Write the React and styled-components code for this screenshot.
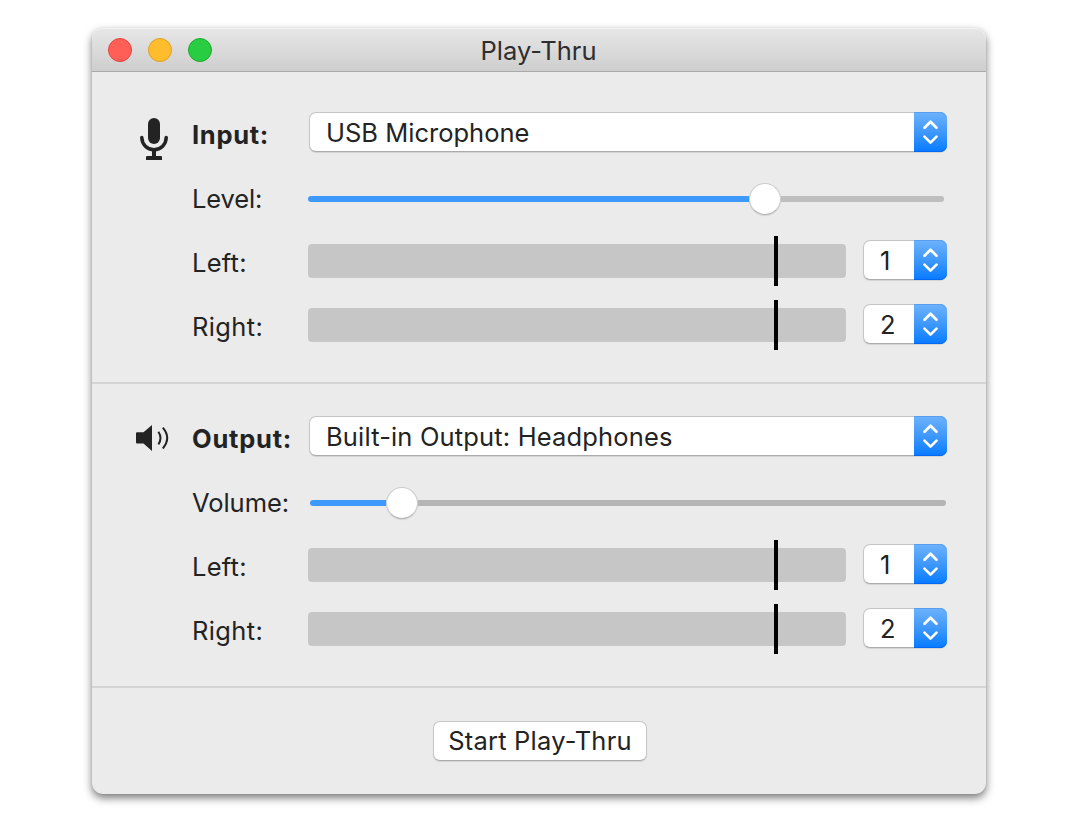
import React from "react";
import styled, { createGlobalStyle } from "styled-components";

const GlobalStyle = createGlobalStyle`
  * { box-sizing: border-box; }
  body {
    margin: 0;
    background: #fff;
    font-family: Inter, "Liberation Sans", sans-serif;
    font-size: 25.5px;
    line-height: 32px;
    color: #232323;
  }
`;

const Desktop = styled.main`
  width: 1080px;
  height: 820px;
  padding: 28px 94px 26px 92px;
  overflow: hidden;
`;

const Window = styled.div`
  height: 766px;
  border-radius: 11px;
  background: #ebebeb;
  box-shadow: 0 4px 9px rgba(0, 0, 0, 0.52), 0 0 1px rgba(0, 0, 0, 0.2);
`;

const TitleBar = styled.header`
  height: 44px;
  display: grid;
  grid-template-columns: 1fr auto 1fr;
  align-items: center;
  padding: 0 17px 0 16px;
  border-radius: 11px 11px 0 0;
  border-bottom: 1px solid #a9a9a9;
  background: linear-gradient(#e7e7e7, #cecece);
  box-shadow: inset 0 1px 0 #f3f3f3;
`;

const Lights = styled.div`
  display: flex;
  gap: 16px;
`;

const Light = styled.span`
  width: 24px;
  height: 24px;
  border-radius: 50%;
  background: ${(p) => p.$fill};
  border: 1px solid ${(p) => p.$edge};
`;

const Text = styled.span`
  white-space: nowrap;
  letter-spacing: ${(p) => p.$track || 0}px;
`;

const Title = styled(Text)`
  padding-top: 2px;
  color: #2e2e2e;
`;

const Section = styled.section`
  display: flex;
  flex-direction: column;
  gap: 24px;
  padding: ${(p) => p.$top}px 39px 38px 44px;
  border-bottom: 2px solid #d4d4d4;
`;

const Row = styled.div`
  height: 40px;
  display: grid;
  grid-template-columns: 56px 116px 639px;
  grid-template-rows: 40px;
  align-items: center;
`;

const IconCell = styled.div`
  align-self: start;
  padding: ${(p) => p.$top}px 0 0 ${(p) => p.$left}px;
  svg { display: block; }
`;

const Label = styled(Text)`
  grid-column: 2;
  padding-top: 5px;
  font-weight: ${(p) => (p.$bold ? 700 : 400)};
`;

const Channel = styled.div`
  display: flex;
  align-items: center;
  justify-content: space-between;
`;

const PopUp = styled.button`
  display: flex;
  align-items: center;
  justify-content: space-between;
  width: ${(p) => p.$width}px;
  height: 40px;
  margin-left: auto;
  padding: 1px 0 0 ${(p) => p.$inset}px;
  border: 1px solid #c6c6c6;
  border-right: 0;
  border-bottom-color: #ababab;
  border-radius: 7px;
  background: #fff;
  box-shadow: 0 1px 1px rgba(0, 0, 0, 0.1);
  font: inherit;
  color: inherit;
`;

const Arrows = styled.span`
  display: block;
  flex: none;
  width: 33px;
  height: 40px;
  margin: -2px 0 -1px;
  border-radius: 0 7px 7px 0;
  background: linear-gradient(#6db3fb, #3f98fb 50%, #067bff);
  box-shadow: inset 0 -1px 0 #0068f5, inset 0 1px 0 #569ff2;
  svg { display: block; }
`;

const Slider = styled.div`
  width: 636px;
  height: 32px;
  margin: 6px 0 0 ${(p) => p.$shift || 0}px;
  display: flex;
  align-items: center;
`;

const Track = styled.span`
  height: 6px;
  flex: ${(p) => (p.$length ? `0 0 ${p.$length}px` : "1")};
  background: ${(p) => p.$color};
  border-radius: ${(p) => (p.$length ? "3px 0 0 3px" : "0 3px 3px 0")};
`;

const Knob = styled.span`
  flex: none;
  width: 32px;
  height: 32px;
  border: 1px solid #cbcbcb;
  border-bottom-color: #b5b5b5;
  border-radius: 50%;
  background: #fff;
  box-shadow: 0 1px 1px rgba(0, 0, 0, 0.1);
`;

const Meter = styled.div`
  width: 538px;
  height: 34px;
  margin-top: 2px;
  padding-left: 466px;
  display: flex;
  align-items: center;
  border-radius: 4px;
  background: #c6c6c6;
`;

const Peak = styled.span`
  flex: none;
  width: 4px;
  height: 50px;
  margin: -8px 0;
  background: #000;
`;

const Footer = styled.footer`
  display: flex;
  justify-content: center;
  padding-top: 33px;
`;

const PushButton = styled.button`
  width: 214px;
  height: 40px;
  margin-left: 2px;
  padding: 0 0 1px;
  border: 1px solid #c6c6c6;
  border-bottom-color: #ababab;
  border-radius: 7px;
  background: #fff;
  box-shadow: 0 1px 1px rgba(0, 0, 0, 0.1);
  font: inherit;
  color: inherit;
`;

const MicIcon = () => (
  <svg width="28" height="42" viewBox="0 0 28 42" fill="#232323">
    <rect x="8" y="0" width="12" height="26" rx="6" />
    <path
      d="M1.8 19.6a12.2 12.2 0 0 0 24.4 0"
      fill="none"
      stroke="#232323"
      strokeWidth="3.5"
      strokeLinecap="round"
    />
    <path d="M12 32h4v6h5q1 0 1 1v3H6v-3q0-1 1-1h5z" />
  </svg>
);

const SpeakerIcon = () => (
  <svg width="34" height="26" viewBox="0 0 34 26" fill="#232323">
    <path d="M1 7.2h6.5L16 0v26l-8.500-7.500H1q-1 0-1-1V8.200q0-1 1-1z" />
    <g fill="none" stroke="#232323" strokeWidth="2">
      <path d="M22.400 6.800q4.200 6.300 0 12.600" />
      <path d="M26.800 2.700q8.800 10.400 0 20.800" />
    </g>
  </svg>
);

const Select = ({ width, inset, track, children }) => (
  <PopUp $width={width} $inset={inset}>
    <Text $track={track}>{children}</Text>
    <Arrows>
      <svg
        width="33"
        height="40"
        fill="none"
        stroke="#fff"
        strokeWidth="2.700"
        strokeLinecap="round"
        strokeLinejoin="round"
      >
        <path d="M10.500 15.700l6-6 6 6M10.500 24.600l6 6 6-6" />
      </svg>
    </Arrows>
  </PopUp>
);

const ChannelRow = ({ label, track, number }) => (
  <Row>
    <Label $track={track}>{label}</Label>
    <Channel>
      <Meter>
        <Peak />
      </Meter>
      <Select width={84} inset={16}>
        {number}
      </Select>
    </Channel>
  </Row>
);

export default function App() {
  return (
    <Desktop>
      <GlobalStyle />
      <Window>
        <TitleBar>
          <Lights>
            <Light $fill="#ff5f57" $edge="#e2463f" />
            <Light $fill="#ffbd2e" $edge="#dfa023" />
            <Light $fill="#28cd41" $edge="#1dad2b" />
          </Lights>
          <Title $track={0.05}>Play-Thru</Title>
        </TitleBar>

        <Section $top={40}>
          <Row>
            <IconCell $top={6} $left={4}>
              <MicIcon />
            </IconCell>
            <Label $bold $track={0.7}>Input:</Label>
            <Select width={638} inset={16} track={0}>USB Microphone</Select>
          </Row>
          <Row>
            <Label $track={-0.15}>Level:</Label>
            <Slider>
              <Track $length={441} $color="#3d9afc" />
              <Knob />
              <Track $color="#bebebe" />
            </Slider>
          </Row>
          <ChannelRow label="Left:" track={0.25} number="1" />
          <ChannelRow label="Right:" track={0.35} number="2" />
        </Section>

        <Section $top={32}>
          <Row>
            <IconCell $top={9} $left={0}>
              <SpeakerIcon />
            </IconCell>
            <Label $bold $track={0.78}>Output:</Label>
            <Select width={638} inset={16} track={0.16}>Built-in Output: Headphones</Select>
          </Row>
          <Row>
            <Label $track={-0.05}>Volume:</Label>
            <Slider $shift={2}>
              <Track $length={76} $color="#3d9afc" />
              <Knob />
              <Track $color="#b5b5b5" />
            </Slider>
          </Row>
          <ChannelRow label="Left:" track={0.25} number="1" />
          <ChannelRow label="Right:" track={0.35} number="2" />
        </Section>

        <Footer>
          <PushButton>
            <Text $track={0.2}>Start Play-Thru</Text>
          </PushButton>
        </Footer>
      </Window>
    </Desktop>
  );
}
